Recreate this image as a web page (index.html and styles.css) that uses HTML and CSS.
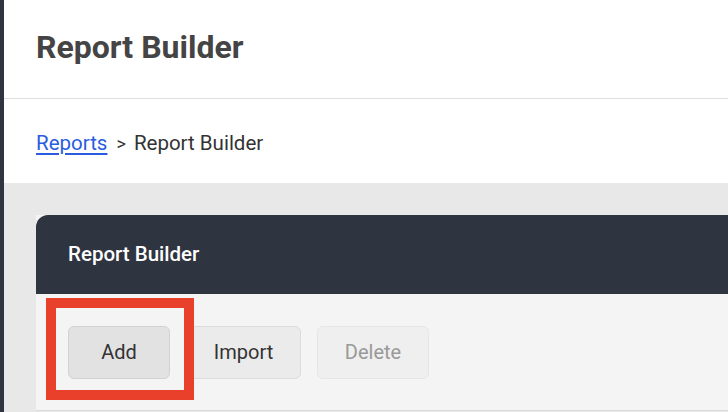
FILE: index.html
```html
<!DOCTYPE html>
<html lang="en">
<head>
<meta charset="utf-8">
<title>Report Builder</title>
<link rel="stylesheet" href="styles.css">
</head>
<body>
<div class="app">
  <aside class="rail"></aside>
  <main class="main">
    <header class="page-header">
      <h1 class="page-title">Report Builder</h1>
    </header>
    <nav class="crumbs">
      <a class="crumb-link" href="#">Reports</a>
      <span class="crumb-sep">&gt;</span>
      <span class="crumb-current">Report Builder</span>
    </nav>
    <section class="content">
      <div class="card">
        <div class="card-head">Report Builder</div>
        <div class="toolbar">
          <span class="highlight"><button class="btn btn-add">Add</button></span>
          <button class="btn btn-import">Import</button>
          <button class="btn btn-delete" disabled>Delete</button>
        </div>
      </div>
    </section>
  </main>
</div>
</body>
</html>
```
FILE: styles.css
```css
* { box-sizing: border-box; }
html, body { margin: 0; padding: 0; height: 100%; }
body {
  font-family: Roboto, "Liberation Sans", sans-serif;
  background: #e8e8e8;
  color: #333;
  overflow: hidden;
}
.app { display: flex; min-height: 100%; }
.rail { width: 4px; flex: 0 0 4px; background: #2e3440; }
.main { flex: 1; display: flex; flex-direction: column; min-width: 0; }
.page-header {
  height: 99px;
  background: #fff;
  border-bottom: 1px solid #dedede;
  display: flex;
  align-items: center;
  padding: 0 0 0 32px;
}
.page-title {
  margin: 0;
  font-size: 32px;
  font-weight: 700;
  color: #444;
  position: relative;
  top: -2px;
}
.crumbs {
  height: 84px;
  background: #fff;
  display: flex;
  align-items: center;
  padding: 4px 0 0 32px;
  font-size: 20.5px;
  color: #333;
}
.crumb-link { color: #2a5ce0; text-decoration: underline; text-underline-offset: 3px; }
.crumb-sep { margin: 0 8px 0 9px; font-size: 18px; }
.content { flex: 1; padding: 32px 0 0 32px; }
.card { background: #f4f4f4; border-bottom: 1px solid #dcdcdc; }
.card-head {
  height: 79px;
  background: #2e3440;
  border-top-left-radius: 12px;
  color: #fff;
  font-size: 20.5px;
  font-weight: 500;
  display: flex;
  align-items: center;
  padding: 0 0 2px 32px;
}
.toolbar {
  display: flex;
  gap: 16px;
  padding: 32px;
  height: 116px;
}
.highlight { position: relative; display: flex; }
.highlight::after {
  content: "";
  position: absolute;
  left: -22px;
  top: -28px;
  right: -24px;
  bottom: -22px;
  border: 10px solid #e8402a;
  pointer-events: none;
}
.btn {
  height: 53px;
  padding: 0 26px 2px;
  border-radius: 6px;
  font-family: inherit;
  font-size: 20px;
  color: #333;
  border: 1px solid #dcdcdc;
  background: #ebebeb;
}
.btn-add { width: 102px; background: #e2e2e2; border-color: #d2d2d2; }
.btn-import { width: 115px; }
.btn-delete { width: 112px; background: #efefef; border-color: #e6e6e6; color: #999; }
```
